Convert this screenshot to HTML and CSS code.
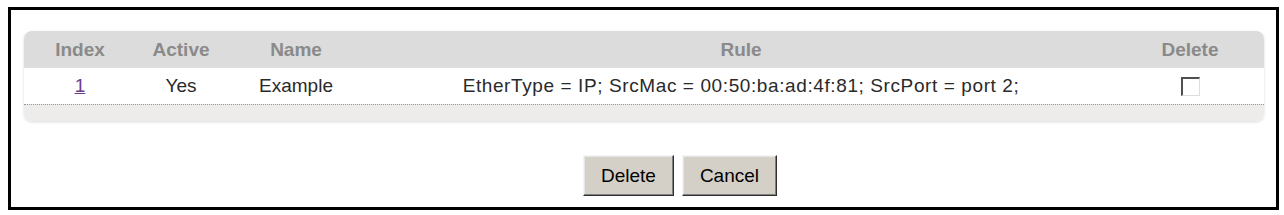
FILE: index.html
```html
<!DOCTYPE html>
<html lang="en">
<head>
    <meta charset="UTF-8">
    <title>Classifier Delete</title>
    <link rel="stylesheet" href="styles.css">
</head>
<body>
    <div class="frame">
        <div class="panel">
            <table class="rules">
                <tr class="head">
                    <th class="col-index">Index</th>
                    <th class="col-active">Active</th>
                    <th class="col-name">Name</th>
                    <th class="col-rule">Rule</th>
                    <th class="col-delete">Delete</th>
                </tr>
                <tr class="row">
                    <td><a href="#">1</a></td>
                    <td>Yes</td>
                    <td>Example</td>
                    <td class="rule-text">EtherType = IP; SrcMac = 00:50:ba:ad:4f:81; SrcPort = port 2;</td>
                    <td><span class="check"></span></td>
                </tr>
            </table>
            <div class="panel-foot"></div>
        </div>
        <div class="buttons">
            <button class="btn">Delete</button>
            <button class="btn">Cancel</button>
        </div>
    </div>
</body>
</html>
```

FILE: styles.css
```css
body {
    margin: 0;
    background: #fff;
    font-family: "Liberation Sans", Arial, sans-serif;
}
.frame {
    margin: 7px 5px 0 8px;
    height: 197px;
    border: 3px solid #000;
}
.panel {
    margin: 21px 0 0 13px;
    width: 1240px;
    border-radius: 8px;
    overflow: hidden;
    box-shadow: 0 1px 3px rgba(0, 0, 0, 0.15);
}
.rules {
    width: 100%;
    border-collapse: collapse;
    table-layout: fixed;
}
.rules th {
    background: #dcdcdc;
    color: #8a8a8a;
    font-size: 19px;
    font-weight: bold;
    height: 37px;
    padding: 0;
    text-align: center;
}
.rules td {
    background: #fff;
    color: #2a2a2a;
    font-size: 19px;
    height: 36px;
    padding: 0;
    text-align: center;
}
.rules .rule-text {
    letter-spacing: 0.6px;
}
.col-index { width: 112px; }
.col-active { width: 90px; }
.col-name { width: 140px; }
.col-rule { width: 750px; }
.col-delete { width: 148px; }
.rules a {
    color: #6e3c8c;
}
.check {
    display: inline-block;
    width: 16px;
    height: 16px;
    vertical-align: middle;
    background: #fff;
    border-top: 2px solid #505050;
    border-left: 2px solid #505050;
    border-right: 1px solid #ddd;
    border-bottom: 1px solid #ddd;
}
.panel-foot {
    height: 16px;
    background: #eeebeb;
    border-top: 1px dotted #999;
}
.buttons {
    display: flex;
    justify-content: center;
    gap: 8px;
    margin-top: 34px;
    padding-left: 73px;
}
.btn {
    font-family: "Liberation Sans", Arial, sans-serif;
    font-size: 19px;
    color: #000;
    background: #d4d0c8;
    height: 41px;
    padding: 0 17px;
    border: 1px solid;
    border-color: #f4f4f4 #303030 #303030 #f4f4f4;
    box-shadow: inset -1px -1px #808080, inset 1px 1px #e6e6e6;
}
```
